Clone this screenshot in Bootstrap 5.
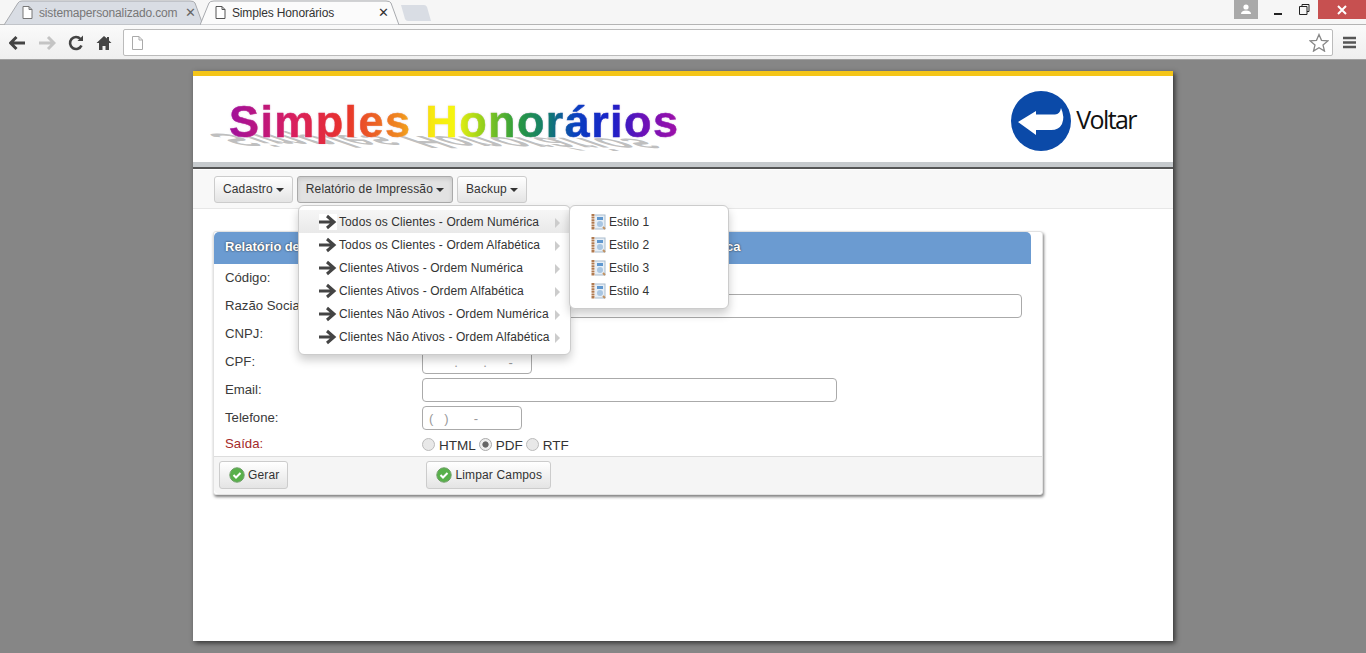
<!DOCTYPE html>
<html lang="pt-BR">
<head>
  <meta charset="UTF-8" />
  <meta name="viewport" content="width=device-width, initial-scale=1">
  <title>Simples Honorários</title>
  <link href="https://cdn.jsdelivr.net/npm/bootstrap@5.3.0/dist/css/bootstrap.min.css" rel="stylesheet">
  <style>
    html, body { height: 653px; overflow: hidden; }
    body { background: #868686; font-family: "Liberation Sans", Arial, sans-serif; font-size: 13px; color: #333; }

    /* browser chrome */
    .win-top { height: 24px; background: #f6f6f6; }
    .tab-shape { width: 199px; height: 25px; margin-right: -3px; font-size: 12px; }
    .tab-shape svg.tab-bg { left: 0; top: 0; }
    .tab-shape span { position: relative; }
    .tab-off { margin-left: 4px; color: #777; padding: 0 7px 0 18px; }
    .tab-on { padding: 0 10px 0 15px; color: #333; }
    .tab-doc { position: relative; margin-right: 6px; flex: none; }
    .tab-title { white-space: nowrap; letter-spacing: -.15px; }
    .tab-x { font-size: 13px; color: #666; line-height: 1; margin-left: auto; }
    .tab-on .tab-x { color: #333; }
    .win-btn { height: 19px; }
    .win-user { width: 24px; background: #a9a9a9; margin-right: 7px; }
    .win-close { width: 48px; background: #c75050; margin-left: 1px; }
    .win-plain { width: 26px; }
    .url-row { height: 36px; background: linear-gradient(#fafafa, #efefef); border-top: 1px solid #b4b4b4; border-bottom: 1px solid #a0a0a0; padding: 4px 9px 3px 9px; }
    .tool-gap { margin-left: 12px; }
    .url-box { width: 1210px; height: 27px; background: #fff; border: 1px solid #bbb; border-radius: 2px; margin-left: 11px; }

    /* page */
    .page-box { width: 980px; height: 570px; margin: 11px 0 0 193px; background: #fff; border-top: 5px solid #f4c518; box-shadow: 2px 2px 5px #333; }
    .head-box { height: 86px; }
    .logo-text { font-weight: 700; font-size: 45px; letter-spacing: 1.4px; line-height: 1; left: 36px; top: 23px; white-space: nowrap;
      background: linear-gradient(90deg, #a0109c 0%, #d81e60 14%, #e8332b 26%, #ef8a20 38%, #f7e810 45%, #f5f510 50%, #8ccc1c 57%, #2a9a40 64%, #127a70 71%, #0a3fc0 77%, #1a20c8 85%, #6a10b8 92%, #a010a8 100%);
      -webkit-background-clip: text; background-clip: text; color: transparent; -webkit-text-stroke: .5px transparent; filter: drop-shadow(0 0 1px #e9d9ec); }
    .logo-shade { font-weight: 700; font-size: 45px; letter-spacing: 1.4px; line-height: 1; left: 28px; top: 41px; color: #bfbfbf; white-space: nowrap;
      transform-origin: left center; transform: rotate(.7deg) scale(.97, -.38) skewX(-50deg); }
    .back-link { right: 37px; top: 15px; gap: 5px; }
    .back-word { font-family: "Open Sans", sans-serif; font-size: 25px; letter-spacing: -1.6px; color: #111; margin-top: -3px; }
    .head-rule { height: 7px; background: #c6cacd; border-bottom: 2px solid #555; }
    .menu-bar { height: 40px; background: #f8f8f8; border-top: 1px solid #fff; border-bottom: 1px solid #e7e7e7; padding: 6px 21px; gap: 4px; }
    .menu-btn { height: 27px; padding: 0 8px 2px 8px; font-size: 12px; letter-spacing: .14px; color: #333; border: 1px solid #ccc; border-radius: 3px; background: linear-gradient(#fff, #e4e4e4); display: flex; align-items: center; }
    .menu-btn.is-open { background: #e2e2e2; border-color: #aaa; box-shadow: inset 0 2px 4px rgba(0,0,0,.12); }
    .menu-btn.dropdown-toggle::after { margin-left: 3px; border-top-width: 4px; border-left-width: 4px; border-right-width: 4px; margin-top: 2px; }

    .drop-main, .drop-sub { display: block; padding: 4px 0 5px; margin: 0; font-size: 12px; border: 1px solid #ccc; border-radius: 6px; box-shadow: 0 5px 10px rgba(0,0,0,.2); background: #fff; z-index: 20; }
    .drop-main { left: 105px; top: 129px; width: 273px; height: 150px; }
    .drop-sub { left: 376px; top: 129px; width: 159px; height: 104px; z-index: 21; }
    .drop-line { height: 23px; padding: 0 0 0 20px; letter-spacing: .1px; color: #333; display: flex; align-items: center; white-space: nowrap; }
    .drop-main .drop-line { position: relative; }
    .drop-main .drop-line::after { content: ""; position: absolute; left: 256px; top: 8px; border-left: 5px solid #ccc; border-top: 5px solid transparent; border-bottom: 5px solid transparent; }
    .drop-line.is-hover { background: linear-gradient(#f6f6f6, #e9e9e9); }
    .drop-line svg { margin-right: 2px; flex: none; }
    .is-hover svg { background: #fff; }
    .drop-sub .drop-line { padding-left: 21px; }
    .drop-sub .drop-line svg { margin-right: 3px; }

    /* form panel */
    .form-box { width: 830px; height: 264px; margin: 22px 0 0 20px; border-radius: 3px; border: 1px solid #e2e2e2; box-shadow: 1px 2px 3px rgba(0,0,0,.5); }
    .form-title { width: 817px; height: 32px; padding: 0 0 0 11px; margin: 0; border: 0; border-radius: 0; background: #6b9bd1; color: #fff; font-weight: 700; font-size: 13px; word-spacing: -.3px; line-height: 29px; text-shadow: 0 0 2px #222; white-space: nowrap; }
    .form-rows { padding: 0; }
    .form-line { height: 28px; }
    .line-name { width: 208px; padding-left: 11px; margin: 0; flex: none; font-size: 13.2px; color: #3a3a3a; }
    .line-input { height: 24px; padding: 0 6px; border: 1px solid #aaa; border-radius: 4px; font-size: 13px; color: #999; font-family: "Liberation Sans", sans-serif; }
    .w-code { width: 110px; }
    .w-wide { width: 600px; }
    .w-mail { width: 415px; }
    .w-tel { width: 100px; }
    .out-line { height: 24px; }
    .out-name { color: #a52a2a; }
    .out-pick { gap: 3px; font-size: 13.5px; padding-top: 4px; }
    .out-pick .form-check-input { width: 13px; height: 13px; margin: 0 0 4px; background-color: #e8e8e8; border-color: #bbb; }
    .out-pick .form-check-input:checked { background-color: #eee; border-color: #aaa; background-image: radial-gradient(#666 35%, transparent 45%); }
    .out-pick label { margin-left: 1px; }
    .form-foot { height: 38px; padding: 4px 5px; background: #f5f5f5; border-top: 1px solid #ddd; }
    .foot-btn { height: 28px; padding: 0 8px 0 9px; font-size: 12px; letter-spacing: .15px; color: #333; border: 1px solid #ccc; border-radius: 3px; background: linear-gradient(#fff, #e4e4e4); display: flex; align-items: center; gap: 3px; }
    .foot-gap { margin-left: 138px; }
  </style>
</head>
<body>
  <!-- browser window chrome -->
  <div class="win-top d-flex align-items-start">
    <div class="tab-shape tab-off position-relative d-flex align-items-center">
      <svg class="tab-bg position-absolute" width="199" height="25"><path d="M0 25 L14 3 Q15 1 18 1 L186 1 Q190 1 191 3 L199 25Z" fill="#d9dde4" stroke="#a8aaae"/></svg>
      <svg class="tab-doc" width="11" height="13"><path d="M1 .5h6l3 3v9H1z M7 .5v3h3" fill="#fff" stroke="#777"/></svg>
      <span class="tab-title">sistemapersonalizado.com</span>
      <span class="tab-x">✕</span>
    </div>
    <div class="tab-shape tab-on position-relative d-flex align-items-center">
      <svg class="tab-bg position-absolute" width="199" height="25"><path d="M0 25 L9 3 Q10 1 14 1 L186 1 Q190 1 191 3 L199 25Z" fill="#fbfbfb" stroke="#a8aaae"/></svg>
      <svg class="tab-doc" width="11" height="13"><path d="M1 .5h6l3 3v9H1z M7 .5v3h3" fill="#fff" stroke="#555"/></svg>
      <span class="tab-title">Simples Honorários</span>
      <span class="tab-x">✕</span>
    </div>
    <svg class="ms-1 mt-1" width="32" height="18"><path d="M1 1 H24 Q26 1 27 3 L31 17 H8 Q6 17 5 15Z" fill="#d9dde4"/></svg>
    <div class="ms-auto d-flex align-items-start">
      <div class="win-btn win-user d-flex justify-content-center align-items-center">
        <svg width="12" height="11"><circle cx="6" cy="3" r="2.6" fill="#fff"/><path d="M1 10 Q1 6.500 6 6.500 T11 10Z" fill="#fff"/></svg>
      </div>
      <div class="win-btn win-plain d-flex justify-content-center align-items-center"><svg width="10" height="14"><path d="M1 11h8" stroke="#222" stroke-width="2"/></svg></div>
      <div class="win-btn win-plain d-flex justify-content-center align-items-center"><svg width="11" height="11"><path d="M3 2.500V.5h7v7H8 M.5 2.500h7.500v8H.5z" fill="none" stroke="#222"/></svg></div>
      <div class="win-btn win-close d-flex justify-content-center align-items-center"><svg width="10" height="10"><path d="M1 1l8 8M9 1l-8 8" stroke="#fff" stroke-width="2"/></svg></div>
    </div>
  </div>
  <div class="url-row d-flex align-items-center">
    <svg width="17" height="16"><path d="M1 8h15M7.500 2L1.500 8l6 6" fill="none" stroke="#444" stroke-width="3"/></svg>
    <svg class="tool-gap" width="18" height="16"><path d="M1 8h15M10 2l6 6-6 6" fill="none" stroke="#c4c4c4" stroke-width="3"/></svg>
    <svg class="tool-gap" width="16" height="16"><path d="M13.500 10.500A6 6 0 1 1 12.500 4" fill="none" stroke="#444" stroke-width="2.600"/><path d="M9.500 6H15V.5z" fill="#444"/></svg>
    <svg class="tool-gap" width="16" height="16"><path d="M8 1L.5 8H3v7h3.500v-4h3v4H13V8h2.500L13 5.500V2h-2v1.500z" fill="#444"/></svg>
    <div class="url-box d-flex align-items-center px-2">
      <svg width="11" height="14"><path d="M.5.5h6.500l3.500 3.500v9.500H.5z M7 .5V4h3.500" fill="#fff" stroke="#aaa"/></svg>
      <svg class="ms-auto" style="margin-right:-5px" width="20" height="19"><path d="M10 1.500l2.500 5.800 6.300.6-4.800 4.100 1.500 6.100L10 14.800l-5.500 3.300L6 12 1.200 7.900l6.300-.6z" fill="#fff" stroke="#888" stroke-width="1.300"/></svg>
    </div>
    <svg class="ms-auto" width="14" height="13"><path d="M0 2h13M0 6.500h13M0 11h13" stroke="#555" stroke-width="2.400"/></svg>
  </div>

  <!-- page -->
  <div class="page-box position-relative">
    <div class="head-box position-relative">
      <div class="logo-shade position-absolute" aria-hidden="true">Simples Honorários</div>
      <div class="logo-text position-absolute">Simples Honorários</div>
      <a class="back-link position-absolute d-flex align-items-center text-decoration-none" href="#">
        <svg width="60" height="60"><circle cx="30" cy="30" r="30" fill="#0b4aa8"/><path d="M7 31L25 20V23.500H44Q49 23 50 17Q54 26 51 33Q48 39 40 39H25V44Z" fill="#fff"/></svg>
        <span class="back-word">Voltar</span>
      </a>
    </div>
    <div class="head-rule"></div>
    <nav class="menu-bar d-flex">
      <button class="menu-btn dropdown-toggle" type="button">Cadastro</button>
      <button class="menu-btn is-open dropdown-toggle" type="button">Relatório de Impressão</button>
      <button class="menu-btn dropdown-toggle" type="button">Backup</button>
    </nav>

    <ul class="dropdown-menu drop-main position-absolute list-unstyled">
      <li class="drop-line is-hover"><svg width="18" height="16"><path d="M0 8h14M8 2l7 6-7 6" fill="none" stroke="#444" stroke-width="3"/></svg>Todos os Clientes - Ordem Numérica</li>
      <li class="drop-line"><svg width="18" height="16"><path d="M0 8h14M8 2l7 6-7 6" fill="none" stroke="#444" stroke-width="3"/></svg>Todos os Clientes - Ordem Alfabética</li>
      <li class="drop-line"><svg width="18" height="16"><path d="M0 8h14M8 2l7 6-7 6" fill="none" stroke="#444" stroke-width="3"/></svg>Clientes Ativos - Ordem Numérica</li>
      <li class="drop-line"><svg width="18" height="16"><path d="M0 8h14M8 2l7 6-7 6" fill="none" stroke="#444" stroke-width="3"/></svg>Clientes Ativos - Ordem Alfabética</li>
      <li class="drop-line"><svg width="18" height="16"><path d="M0 8h14M8 2l7 6-7 6" fill="none" stroke="#444" stroke-width="3"/></svg>Clientes Não Ativos - Ordem Numérica</li>
      <li class="drop-line"><svg width="18" height="16"><path d="M0 8h14M8 2l7 6-7 6" fill="none" stroke="#444" stroke-width="3"/></svg>Clientes Não Ativos - Ordem Alfabética</li>
    </ul>
    <ul class="dropdown-menu drop-sub position-absolute list-unstyled">
      <li class="drop-line"><svg width="15" height="16"><rect x="3" y="1" width="11" height="14" fill="#e6eef6" stroke="#a9bccd"/><rect x="0" y="0" width="4" height="16" fill="#fff"/><path d="M2 0v16" stroke="#b07a50" stroke-width="3" stroke-dasharray="2 .6"/><rect x="6" y="3" width="6" height="3" fill="#5f97cf"/><circle cx="9" cy="10" r="3" fill="#a9c6e2"/><path d="M12 13l2 2" stroke="#c09060" stroke-width="2"/></svg>Estilo 1</li>
      <li class="drop-line"><svg width="15" height="16"><rect x="3" y="1" width="11" height="14" fill="#e6eef6" stroke="#a9bccd"/><rect x="0" y="0" width="4" height="16" fill="#fff"/><path d="M2 0v16" stroke="#b07a50" stroke-width="3" stroke-dasharray="2 .6"/><rect x="6" y="3" width="6" height="3" fill="#5f97cf"/><circle cx="9" cy="10" r="3" fill="#a9c6e2"/><path d="M12 13l2 2" stroke="#c09060" stroke-width="2"/></svg>Estilo 2</li>
      <li class="drop-line"><svg width="15" height="16"><rect x="3" y="1" width="11" height="14" fill="#e6eef6" stroke="#a9bccd"/><rect x="0" y="0" width="4" height="16" fill="#fff"/><path d="M2 0v16" stroke="#b07a50" stroke-width="3" stroke-dasharray="2 .6"/><rect x="6" y="3" width="6" height="3" fill="#5f97cf"/><circle cx="9" cy="10" r="3" fill="#a9c6e2"/><path d="M12 13l2 2" stroke="#c09060" stroke-width="2"/></svg>Estilo 3</li>
      <li class="drop-line"><svg width="15" height="16"><rect x="3" y="1" width="11" height="14" fill="#e6eef6" stroke="#a9bccd"/><rect x="0" y="0" width="4" height="16" fill="#fff"/><path d="M2 0v16" stroke="#b07a50" stroke-width="3" stroke-dasharray="2 .6"/><rect x="6" y="3" width="6" height="3" fill="#5f97cf"/><circle cx="9" cy="10" r="3" fill="#a9c6e2"/><path d="M12 13l2 2" stroke="#c09060" stroke-width="2"/></svg>Estilo 4</li>
    </ul>

    <div class="card form-box">
      <div class="card-header form-title">Relatório de Impressão Completo de Clientes - Todos os Clientes - Ordem Numérica</div>
      <div class="card-body form-rows">
        <div class="form-line d-flex align-items-center"><label class="line-name">Código:</label><input class="line-input w-code" type="text"></div>
        <div class="form-line d-flex align-items-center"><label class="line-name">Razão Social:</label><input class="line-input w-wide" type="text"></div>
        <div class="form-line d-flex align-items-center"><label class="line-name">CNPJ:</label><input class="line-input w-code" type="text"></div>
        <div class="form-line d-flex align-items-center"><label class="line-name">CPF:</label><input class="line-input w-code" type="text" value="       .       .      -"></div>
        <div class="form-line d-flex align-items-center"><label class="line-name">Email:</label><input class="line-input w-mail" type="text"></div>
        <div class="form-line d-flex align-items-center"><label class="line-name">Telefone:</label><input class="line-input w-tel" type="text" value="(   )       -"></div>
        <div class="out-line d-flex align-items-center">
          <label class="line-name out-name">Saída:</label>
          <div class="out-pick d-flex align-items-center">
            <input class="form-check-input" type="radio" name="saida" id="s1"><label for="s1">HTML</label>
            <input class="form-check-input" type="radio" name="saida" id="s2" checked><label for="s2">PDF</label>
            <input class="form-check-input" type="radio" name="saida" id="s3"><label for="s3">RTF</label>
          </div>
        </div>
      </div>
      <div class="card-footer form-foot d-flex">
        <button class="foot-btn" type="button"><svg width="16" height="16"><circle cx="8" cy="8" r="7.200" fill="#58b04a" stroke="#6f9f68"/><path d="M4.500 8l2.500 2.500 4.500-4.500" fill="none" stroke="#fff" stroke-width="2"/></svg>Gerar</button>
        <button class="foot-btn foot-gap" type="button"><svg width="16" height="16"><circle cx="8" cy="8" r="7.200" fill="#58b04a" stroke="#6f9f68"/><path d="M4.500 8l2.500 2.500 4.500-4.500" fill="none" stroke="#fff" stroke-width="2"/></svg>Limpar Campos</button>
      </div>
    </div>
  </div>
  <script src="https://cdn.jsdelivr.net/npm/bootstrap@5.3.0/dist/js/bootstrap.bundle.min.js"></script>
</body>
</html>
